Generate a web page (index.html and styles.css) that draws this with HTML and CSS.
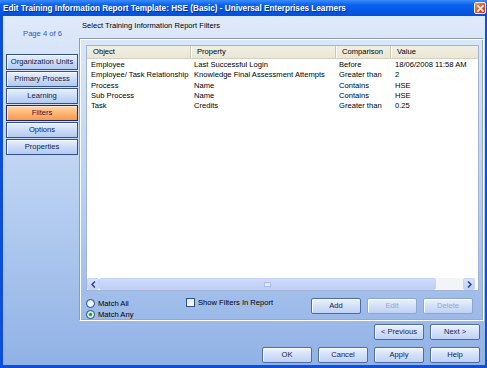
FILE: index.html
```html
<!DOCTYPE html>
<html>
<head>
<meta charset="utf-8">
<link rel="stylesheet" href="styles.css">
</head>
<body>
<div class="window">
  <div class="titlebar">
    <span class="title">Edit Training Information Report Template: HSE (Basic) - Universal Enterprises Learners</span>
    <span class="close"><svg width="9" height="9" viewBox="0 0 9 9"><path d="M2 2 L7 7 M7 2 L2 7" stroke="#fff" stroke-width="1.6" stroke-linecap="square"/></svg></span>
  </div>
  <div class="client">
    <div class="top">
      <aside class="sidebar">
        <div class="page">Page 4 of 6</div>
        <nav class="nav">
          <div class="nav-btn">Organization Units</div>
          <div class="nav-btn">Primary Process</div>
          <div class="nav-btn">Learning</div>
          <div class="nav-btn active">Filters</div>
          <div class="nav-btn">Options</div>
          <div class="nav-btn">Properties</div>
        </nav>
      </aside>
      <main class="main">
        <div class="heading">Select Training Information Report Filters</div>
        <section class="group">
          <div class="list">
            <div class="list-head">
              <div class="hcell c1">Object</div>
              <div class="hcell c2">Property</div>
              <div class="hcell c3">Comparison</div>
              <div class="hcell c4">Value</div>
            </div>
            <div class="list-body">
              <div class="lrow"><div class="cell c1">Employee</div><div class="cell c2">Last Successful Login</div><div class="cell c3">Before</div><div class="cell c4">18/06/2008 11:58 AM</div></div>
              <div class="lrow"><div class="cell c1">Employee/ Task Relationship</div><div class="cell c2">Knowledge Final Assessment Attempts</div><div class="cell c3">Greater than</div><div class="cell c4">2</div></div>
              <div class="lrow"><div class="cell c1">Process</div><div class="cell c2">Name</div><div class="cell c3">Contains</div><div class="cell c4">HSE</div></div>
              <div class="lrow"><div class="cell c1">Sub Process</div><div class="cell c2">Name</div><div class="cell c3">Contains</div><div class="cell c4">HSE</div></div>
              <div class="lrow"><div class="cell c1">Task</div><div class="cell c2">Credits</div><div class="cell c3">Greater than</div><div class="cell c4">0.25</div></div>
            </div>
            <div class="hscroll">
              <div class="sb-arrow"><svg width="5" height="7" viewBox="0 0 5 7"><path d="M4 0.5 L1 3.5 L4 6.5" fill="none" stroke="#2b3e70" stroke-width="1.4"/></svg></div>
              <div class="sb-thumb"><span class="grip"></span></div>
              <div class="sb-track"></div>
              <div class="sb-arrow"><svg width="5" height="7" viewBox="0 0 5 7"><path d="M1 0.5 L4 3.5 L1 6.5" fill="none" stroke="#2b3e70" stroke-width="1.4"/></svg></div>
              <div class="sb-end"></div>
            </div>
          </div>
          <div class="group-foot">
            <div class="radios">
              <label class="radio"><span class="rdot"></span>Match All</label>
              <label class="radio"><span class="rdot on"></span>Match Any</label>
            </div>
            <label class="check"><span class="cbox"></span>Show Filters In Report</label>
            <div class="btns">
              <div class="btn">Add</div>
              <div class="btn disabled">Edit</div>
              <div class="btn disabled">Delete</div>
            </div>
          </div>
        </section>
      </main>
    </div>
    <div class="row-nav">
      <div class="btn">&lt; Previous</div>
      <div class="btn">Next &gt;</div>
    </div>
    <div class="row-actions">
      <div class="btn">OK</div>
      <div class="btn">Cancel</div>
      <div class="btn">Apply</div>
      <div class="btn">Help</div>
    </div>
  </div>
</div>
</body>
</html>
```
FILE: styles.css
```css
* { box-sizing: border-box; }
html, body { margin: 0; padding: 0; }
body {
  width: 487px;
  height: 368px;
  overflow: hidden;
  font-family: "Liberation Sans", Arial, sans-serif;
  font-size: 7.6px;
  color: #000;
}
.window {
  width: 487px;
  height: 368px;
  display: flex;
  flex-direction: column;
  background: #0b4fdc;
}
.titlebar {
  height: 16px;
  flex: none;
  display: flex;
  align-items: center;
  justify-content: space-between;
  padding: 0 1px 0 3px;
  background: linear-gradient(#3a8cfb 0%, #0c62ee 30%, #0257e6 70%, #0650d4 100%);
}
.title {
  color: #fff;
  font-weight: bold;
  font-size: 8.2px;
  white-space: nowrap;
  text-shadow: 1px 1px 0 #0a2f8c;
}
.close {
  width: 12px;
  height: 12px;
  border: 1px solid #f4f0ee;
  border-radius: 2px;
  background: linear-gradient(135deg, #f49a70, #e0522a 55%, #c63c14);
  display: flex;
  align-items: center;
  justify-content: center;
}
.client {
  flex: 1;
  margin: 0 2px 3px 3px;
  background: linear-gradient(#dfeafa, #b9d0f1 50%, #91b2e6);
  display: flex;
  flex-direction: column;
}
.top {
  display: flex;
  height: 305px;
}
.sidebar {
  width: 76px;
  flex: none;
}
.page {
  padding-top: 13px;
  line-height: 10px;
  height: 23px;
  text-align: center;
  padding-left: 3px;
  color: #2a5bc4;
}
.nav {
  margin-top: 15px;
  margin-left: 3px;
  width: 72px;
  display: flex;
  flex-direction: column;
  gap: 1px;
}
.nav-btn {
  height: 16px;
  line-height: 14px;
  text-align: center;
  color: #101c48;
  border: 1px solid #334f90;
  background: linear-gradient(#e9f0fc, #c9daf6 55%, #b4caf0);
  box-shadow: inset 1px 1px 0 #f6f9ff;
}
.nav-btn.active {
  border-color: #1c2a6a;
  background: linear-gradient(#ffd8aa, #ffb676 50%, #ff9848);
  box-shadow: inset 1px 1px 0 #ffe6c8;
}
.main {
  flex: 1;
  display: flex;
  flex-direction: column;
}
.heading {
  height: 22px;
  padding: 3px 0 0 3px;
  line-height: 13px;
  color: #000;
}
.group {
  height: 283px;
  margin-right: 4px;
  border: 1px solid;
  border-color: #8f9bb2 #ffffff #ffffff #8f9bb2;
  box-shadow: inset 1px 1px 0 #ffffff, inset -1px -1px 0 #9aa8c2;
  padding: 6px 4px 0 6px;
  display: flex;
  flex-direction: column;
}
.list {
  height: 246px;
  flex: none;
  border: 1px solid #a3b4d4;
  background: #fff;
  display: flex;
  flex-direction: column;
}
.list-head {
  height: 13px;
  flex: none;
  display: flex;
  background: linear-gradient(#f0efe3, #e9e7d6);
  border-bottom: 1px solid #d4d0bd;
}
.hcell {
  line-height: 12px;
  padding-left: 6px;
}
.hcell + .hcell { border-left: 1px solid #cbc7b3; box-shadow: inset 1px 0 0 #fff; }
.c1 { width: 103px; flex: none; }
.c2 { width: 145px; flex: none; }
.c3 { width: 55px; flex: none; }
.c4 { flex: 1; }
.list-body {
  flex: 1;
  padding-top: 1px;
}
.lrow {
  display: flex;
  height: 10.3px;
  line-height: 10.3px;
  white-space: nowrap;
}
.cell { padding-left: 4px; overflow: hidden; }
.cell.c4 { padding-left: 5px; }
.hscroll {
  height: 12px;
  flex: none;
  display: flex;
}
.sb-arrow {
  width: 12px;
  flex: none;
  background: linear-gradient(#d6e2fc, #bdd0f7);
  border: 1px solid #c7d5f5;
  border-radius: 2px;
  display: flex;
  align-items: center;
  justify-content: center;
}
.sb-thumb {
  width: 337px;
  flex: none;
  background: linear-gradient(#cfdcfb, #bccdf6);
  border: 1px solid #c3d2f5;
  border-radius: 2px;
  display: flex;
  align-items: center;
  justify-content: center;
}
.grip {
  width: 7px;
  height: 5px;
  border: 1px solid #a8bde9;
  background: #e2eafc;
}
.sb-track {
  flex: 1;
  background: #f3f4f8;
}
.sb-end { width: 3px; flex: none; background: #fff; }
.group-foot {
  flex: 1;
  display: flex;
  align-items: flex-start;
  padding-top: 5px;
}
.radios {
  display: flex;
  flex-direction: column;
  gap: 2px;
  width: 100px;
  flex: none;
  padding-top: 3px;
}
.radio, .check {
  display: flex;
  align-items: center;
  gap: 3px;
  line-height: 9px;
  color: #000;
}
.rdot {
  width: 9px;
  height: 9px;
  border-radius: 50%;
  border: 1px solid #1e4d86;
  background: radial-gradient(circle at 60% 60%, #fff, #dde2ea);
  display: flex;
  align-items: center;
  justify-content: center;
}
.rdot.on::after {
  content: "";
  width: 3px;
  height: 3px;
  border-radius: 50%;
  background: #1fa21f;
  box-shadow: 0 0 0 0.5px #6fd06f;
}
.check {
  margin-top: 2px;
  width: 125px;
  flex: none;
}
.cbox {
  width: 9px;
  height: 9px;
  border: 1px solid #2a5582;
  background: linear-gradient(135deg, #e2e2da, #fff);
}
.btns {
  display: flex;
  gap: 6px;
  margin-left: auto;
  margin-right: 6px;
  margin-top: 2px;
}
.btn {
  width: 50px;
  height: 16px;
  line-height: 14px;
  text-align: center;
  color: #14234f;
  border: 1px solid #4f6aa5;
  border-radius: 2px;
  background: linear-gradient(#eef3fd, #d3e0f8 50%, #bfd2f4);
  box-shadow: inset 1px 1px 0 #fbfdff;
}
.btn.disabled {
  color: #96a7cc;
  border-color: #8ea5d4;
}
.row-nav {
  display: flex;
  justify-content: flex-end;
  gap: 6px;
  padding-right: 5px;
  margin-top: 3px;
}
.row-actions {
  display: flex;
  justify-content: flex-end;
  gap: 6px;
  padding-right: 5px;
  margin-top: 7px;
}
```
